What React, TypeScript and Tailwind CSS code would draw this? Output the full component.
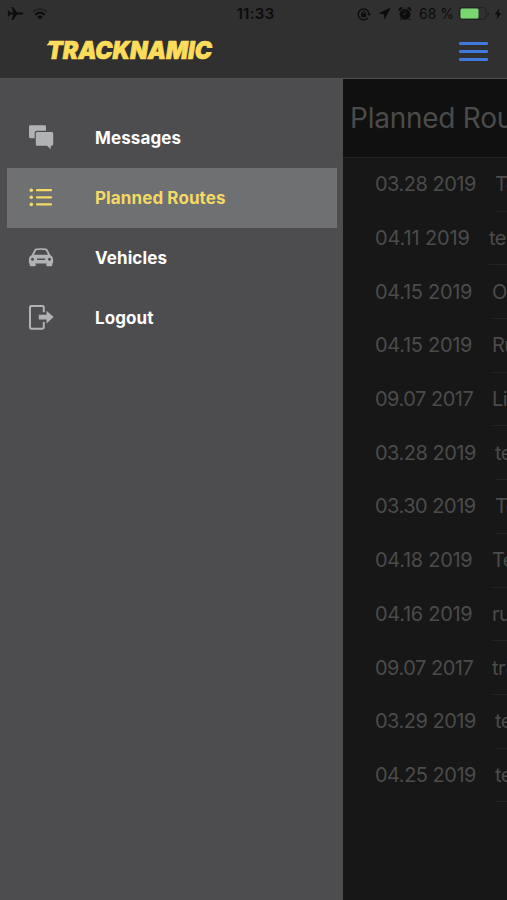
import type { ReactNode } from 'react'

const routes = [
  { date: '03.28 2019', name: 'Test route', dateCell: 'w-[120px] tracking-[-0.5px]' },
  { date: '04.11 2019', name: 'test', dateCell: 'w-[114px] tracking-[-0.15px]' },
  { date: '04.15 2019', name: 'Oslo', dateCell: 'w-[117px] tracking-[-0.3px]' },
  { date: '04.15 2019', name: 'Rute', dateCell: 'w-[117px] tracking-[-0.3px]' },
  { date: '09.07 2017', name: 'Lillehammer', dateCell: 'w-[117px] tracking-[-0.5px]' },
  { date: '03.28 2019', name: 'test', dateCell: 'w-[120px] tracking-[-0.5px]' },
  { date: '03.30 2019', name: 'Test', dateCell: 'w-[120px] tracking-[-0.5px]' },
  { date: '04.18 2019', name: 'Test', dateCell: 'w-[117px] tracking-[-0.3px]' },
  { date: '04.16 2019', name: 'rute', dateCell: 'w-[117px] tracking-[-0.3px]' },
  { date: '09.07 2017', name: 'trip', dateCell: 'w-[117px] tracking-[-0.5px]' },
  { date: '03.29 2019', name: 'test', dateCell: 'w-[120px] tracking-[-0.5px]' },
  { date: '04.25 2019', name: 'test', dateCell: 'w-[120px] tracking-[-0.5px]' },
]

function MessagesIcon() {
  return (
    <svg width="26" height="26" viewBox="0 0 26 26" fill="currentColor">
      <path d="M2.4 .2H16.6Q18 .2 18 1.6V5.7H9Q6.7 5.7 6.7 8V13.2H2.4Q1 13.2 1 11.8V1.6Q1 .2 2.4 .2Z" />
      <path d="M9.3 6.9H23.7Q25.2 6.9 25.2 8.4V19.2Q25.2 20.7 23.7 20.7H22.7V24.2L19 20.7H9.3Q7.8 20.7 7.8 19.2V8.4Q7.8 6.9 9.3 6.9Z" />
    </svg>
  )
}

function ListIcon() {
  return (
    <svg width="26" height="26" viewBox="0 0 26 26" fill="currentColor">
      <circle cx="3.3" cy="5.2" r="1.8" />
      <circle cx="3.3" cy="12.3" r="1.8" />
      <circle cx="3.3" cy="19.4" r="1.8" />
      <rect x="8" y="4.1" width="16" height="2.2" rx="0.8" />
      <rect x="8" y="11.2" width="16" height="2.2" rx="0.8" />
      <rect x="8" y="18.3" width="16" height="2.2" rx="0.8" />
    </svg>
  )
}

function CarIcon() {
  return (
    <svg width="26" height="26" viewBox="0 0 26 26" fill="currentColor">
      <path
        fillRule="evenodd"
        d="M8 3.6Q13 2.7 18 3.6Q19.2 3.9 19.8 5L22.2 9.7Q25.1 11.5 25.1 14.5V18.4H.9V14.5Q.9 11.5 3.8 9.7L6.2 5Q6.8 3.9 8 3.6ZM8.2 5.3L6 9.7H20L17.8 5.3Q13 4.4 8.2 5.3ZM4.5 12.7A1.5 1.5 0 1 0 4.5 15.7A1.5 1.5 0 1 0 4.5 12.7ZM21.5 12.7A1.5 1.5 0 1 0 21.5 15.7A1.5 1.5 0 1 0 21.5 12.7ZM9 13.5V15H17V13.5Z"
      />
      <rect x="1.7" y="18" width="6" height="3.2" rx="1.2" />
      <rect x="18.3" y="18" width="6" height="3.2" rx="1.2" />
    </svg>
  )
}

function LogoutIcon() {
  return (
    <svg width="26" height="26" viewBox="0 0 26 26">
      <path
        d="M15.8 7.2V2.4Q15.8 .9 14.1 .9H3.7Q2 .9 2 2.6V22Q2 23.7 3.7 23.7H14.1Q15.8 23.7 15.8 22V17"
        fill="none"
        stroke="currentColor"
        strokeWidth="2"
      />
      <path d="M10.8 9.7H18.5V5.7L25.6 12.1L18.5 18.5V14.5H10.8Z" fill="currentColor" />
    </svg>
  )
}

function Logo() {
  return (
    <svg width="170" height="26" viewBox="0 0 170 26" fill="#fbdd5b" stroke="#fbdd5b" strokeWidth="0.7">
      <path d="M6 3.9Q2.2 4 .6 7.6Q3 6.8 6 7.3Z" stroke="none" />
      <text
        x="1"
        y="21.3"
        textLength="165"
        lengthAdjust="spacingAndGlyphs"
        className="font-['Inter',sans-serif] text-[24.5px] font-black italic"
      >
        TRACKNAMIC
      </text>
    </svg>
  )
}

function StatusBar() {
  return (
    <div className="grid h-[27px] grid-cols-[1fr_auto_1fr] items-center pl-[7px] pr-[5px] text-[#0c0c0c]">
      <div className="flex items-center gap-[8px]">
        <svg width="17" height="16" viewBox="0 0 17 16" fill="currentColor">
          <path d="M16.3 7.5C16.3 6.7 15 6.4 14 6.4H10L6 1H4.4L6.5 6.4H3.3L1.8 4.5H.6L1.4 7.5L.6 10.5H1.8L3.3 8.6H6.5L4.4 14H6L10 8.6H14C15 8.6 16.3 8.3 16.3 7.5Z" />
        </svg>
        <svg width="16" height="12" viewBox="0 0 16 12" fill="none" stroke="currentColor" strokeWidth="2">
          <path d="M1 4Q8-2 15 4" opacity=".35" />
          <path d="M3.3 6.8Q8 2.8 12.7 6.8" />
          <path d="M5.3 8.7Q8 6.5 10.7 8.7L8 11.5Z" fill="currentColor" stroke="none" />
        </svg>
      </div>
      <span className="pl-[2px] pt-[1px] text-[15px] font-semibold tracking-[0.3px]">11:33</span>
      <div className="flex items-center justify-end">
        <svg className="mr-[7px]" width="14" height="14" viewBox="0 0 14 14" fill="none" stroke="currentColor">
          <path d="M10.8 10.9A5.4 5.4 0 1 1 12 6.6" strokeWidth="1.4" />
          <path d="M10.2 6.5H14L12.1 9Z" fill="currentColor" stroke="none" />
          <rect x="4.2" y="6.3" width="5" height="3.8" fill="currentColor" stroke="none" />
          <path d="M5.2 6.5V5.2Q6.7 2.8 8.2 5.2V6.5" />
        </svg>
        <svg className="mr-[7px]" width="13" height="13" viewBox="0 0 12 12" fill="currentColor">
          <path d="M11.8.3L.3 6.1L5.4 6.8L6 11.8Z" />
        </svg>
        <svg className="mr-[7px]" width="14" height="14" viewBox="0 0 13 14">
          <path d="M.8 3.8Q1 1.2 4 1M12.2 3.8Q12 1.2 9 1" fill="none" stroke="currentColor" strokeWidth="1.8" />
          <circle cx="6.5" cy="7.3" r="5.4" fill="currentColor" />
          <path d="M2.7 11.5L1.7 13M10.3 11.5L11.3 13" stroke="currentColor" strokeWidth="1.3" />
          <path d="M6.5 4.3V7.6H4.2" fill="none" stroke="#303030" strokeWidth=".8" />
        </svg>
        <span className="whitespace-nowrap text-[14px]">68 %</span>
        <svg className="ml-[5px] mr-[4px]" width="31" height="14" viewBox="0 0 31 14">
          <rect x=".5" y=".4" width="26.5" height="12" rx="2.5" fill="none" stroke="#222222" />
          <rect x="1.5" y="1.4" width="18" height="10" rx="1.5" fill="#78d86f" />
          <path d="M28.5 4.5V8.5Q30 8 30 6.5T28.5 4.5Z" fill="#202020" />
        </svg>
        <svg width="8" height="12" viewBox="0 0 8 12" fill="currentColor">
          <path d="M5.2.5L.7 6.5H3.5L2.5 11.5L7.4 5H4.5Z" />
        </svg>
      </div>
    </div>
  )
}

function MenuItem({ icon, label, active = false }: { icon: ReactNode; label: string; active?: boolean }) {
  return (
    <li
      className={`flex h-[59.8px] items-center pl-[21px] text-[17px] font-bold tracking-[0.1px] ${
        active ? 'bg-[#6e7072] text-[#f4d965]' : 'text-white'
      }`}
    >
      <span className={`mr-[41px] ${active ? '' : 'text-[#b1b2b4]'}`}>{icon}</span>
      <span className="pt-[1.5px]">{label}</span>
    </li>
  )
}

export default function App() {
  return (
    <div className="flex h-[900px] w-[507px] flex-col overflow-hidden bg-[#171717] font-['Inter',sans-serif]">
      <header className="h-[79px] shrink-0 border-b border-[#505051] bg-[#303030]">
        <StatusBar />
        <div className="flex h-[48px] items-center justify-between pl-[46px] pr-[19px]">
          <Logo />
          <button aria-label="Menu" className="flex flex-col gap-[5px]">
            <span className="h-[3px] w-[29px] rounded-[1px] bg-[#4078df]" />
            <span className="h-[3px] w-[29px] rounded-[1px] bg-[#4078df]" />
            <span className="h-[3px] w-[29px] rounded-[1px] bg-[#4078df]" />
          </button>
        </div>
      </header>

      <div className="flex min-h-0 flex-1">
        <nav className="w-[343px] shrink-0 bg-[#4d4d4f] px-[7px] pt-[29.5px]">
          <ul className="w-[330px]">
            <MenuItem icon={<MessagesIcon />} label="Messages" />
            <MenuItem icon={<ListIcon />} label="Planned Routes" active />
            <MenuItem icon={<CarIcon />} label="Vehicles" />
            <MenuItem icon={<LogoutIcon />} label="Logout" />
          </ul>
        </nav>

        <main className="min-w-0 flex-1 overflow-hidden text-[#4b4b4b]">
          <h1 className="flex h-[79px] items-center whitespace-nowrap border-b border-[#232323] bg-[#101010] pl-[7px] text-[28px] tracking-[-0.25px]">
            Planned Routes
          </h1>
          <ul>
            {routes.map((route, i) => (
              <li key={i} className="flex h-[53.7px] pl-[32px] text-[20px]">
                <span className={`flex shrink-0 items-center whitespace-nowrap pb-px ${route.dateCell}`}>
                  {route.date}
                </span>
                <span className="flex flex-1 items-center whitespace-nowrap border-b border-[#232323] tracking-[-0.5px]">
                  {route.name}
                </span>
              </li>
            ))}
          </ul>
        </main>
      </div>
    </div>
  )
}
